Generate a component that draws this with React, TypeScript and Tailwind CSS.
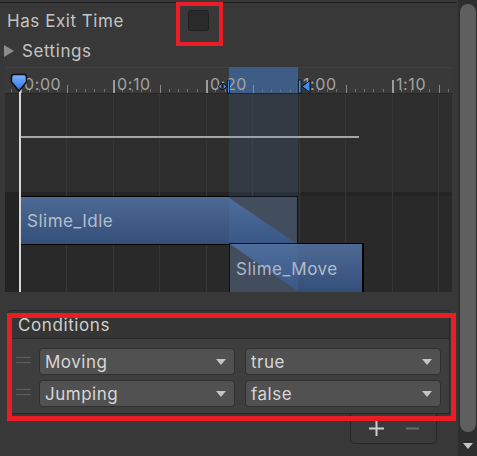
import React from "react";

const font = { fontFamily: "Inter, 'Noto Sans', sans-serif" };

const PX_PER_FRAME = 9.3;
const START = 15;

function Ruler() {
  const ticks: React.ReactElement[] = [];
  for (let f = -1; f <= 47; f++) {
    const x = START + f * PX_PER_FRAME;
    if (x < 0 || x > 447) continue;
    if (f % 10 === 0) {
      ticks.push(<rect key={f} x={Math.round(x)} y={13} width={2} height={13} fill="#9c9c9c" />);
    } else if (f % 5 === 0) {
      ticks.push(<rect key={f} x={Math.round(x)} y={18} width={1} height={8} fill="#8a8a8a" />);
    } else {
      ticks.push(<rect key={f} x={Math.round(x)} y={22} width={1} height={3} fill="#6e6e6e" />);
    }
  }
  return (
    <svg width={447} height={26} className="absolute left-0 top-0">
      {ticks}
    </svg>
  );
}

const labels = [
  { t: "0:00", x: 19 },
  { t: "0:10", x: 112 },
  { t: "0:20", x: 205 },
  { t: "1:00", x: 298 },
  { t: "1:10", x: 391 },
];

const gridXs = [61, 108, 154, 201, 247, 294, 340, 387, 433];

function Timeline() {
  return (
    <div className="relative ml-[5px] mt-[3px] w-[447px] h-[225px] overflow-hidden bg-[#2d2d2d]">
      <div className="absolute left-0 top-0 w-[447px] h-[26px] bg-[#393939] border-t border-[#414141]" />
      <div className="absolute left-[224px] top-0 w-[69px] h-[26px] bg-[#3d5c86]" />
      <Ruler />
      {labels.map((l) => (
        <span
          key={l.t}
          className="absolute top-[9px] text-[16px] leading-[16px] tracking-[0.6px] text-[#a3a3a3]"
          style={{ left: l.x }}
        >
          {l.t}
        </span>
      ))}
      <div className="absolute left-0 top-[26px] w-[447px] h-[1px] bg-[#262626]" />

      <div className="absolute left-0 top-[27px] w-[447px] h-[98px] bg-[#2e2e2e]" />
      <div className="absolute left-0 top-[125px] w-[447px] h-[4px] bg-[#242424]" />
      <div className="absolute left-0 top-[129px] w-[447px] h-[96px] bg-[#292929]" />
      <div className="absolute left-0 top-[125px] w-[14px] h-[100px] bg-[#232323]" />

      {gridXs.map((x) => (
        <div key={x} className="absolute top-[27px] w-[1px] h-[198px] bg-[#363636]" style={{ left: x }} />
      ))}

      <div className="absolute left-[15px] top-[69px] w-[339px] h-[2px] bg-[#a6a6a6]" />

      {/* Slime_Idle clip */}
      <div className="absolute left-[15px] top-[129px] w-[278px] h-[49px] bg-black p-[1px] pl-0">
        <div className="relative w-full h-full bg-gradient-to-b from-[#4d6a94] to-[#34507a] overflow-hidden">
          <svg className="absolute right-0 top-0" width={69} height={47}>
            <polygon points="0,0 69,0 69,47" fill="#3f444c" />
          </svg>
          <span className="absolute left-[7px] top-[14px] text-[17px] leading-[20px] tracking-[0.5px] text-[#b5bdca]">Slime_Idle</span>
        </div>
      </div>

      {/* Slime_Move clip */}
      <div className="absolute left-[224px] top-[176px] w-[135px] h-[50px] bg-black p-[1px] pr-[2px]">
        <div className="relative w-full h-full bg-gradient-to-b from-[#4d6a94] to-[#34507a] overflow-hidden">
          <svg className="absolute left-0 top-0" width={69} height={48}>
            <polygon points="0,0 69,48 0,48" fill="#3f444c" />
          </svg>
          <span className="absolute left-[6px] top-[15px] text-[17px] leading-[20px] tracking-[0.5px] text-[#b5bdca]">Slime_Move</span>
        </div>
      </div>

      <div className="absolute left-[224px] top-[27px] w-[69px] h-[198px] bg-[rgba(90,140,210,0.13)]" />

      <div className="absolute left-[14px] top-[22px] w-[2px] h-[203px] bg-[#d6d6d6]" />

      <svg className="absolute left-[5px] top-[6px]" width={18} height={20} viewBox="0 0 18 20">
        <defs>
          <linearGradient id="mk" x1="0" y1="0" x2="0" y2="1">
            <stop offset="0" stopColor="#7ab4ff" />
            <stop offset="1" stopColor="#2d6fe0" />
          </linearGradient>
        </defs>
        <path d="M1.5 4 Q1.5 1.5 4 1.5 H14 Q16.5 1.5 16.5 4 V9 L9 18 L1.5 9 Z" fill="url(#mk)" stroke="#111" strokeWidth="1.5" />
      </svg>

      <svg className="absolute left-[212px] top-[12px]" width={13} height={15} viewBox="0 0 13 15">
        <path d="M1 7.5 L5 4 L5 11 Z" fill="#3d8cf0" stroke="#0d0d0d" strokeWidth="1" />
        <path d="M10 7.5 L6 4 L6 11 Z" fill="#3d8cf0" stroke="#0d0d0d" strokeWidth="1" />
        <rect x="10.5" y="1" width="2" height="13" fill="#3d8cf0" stroke="#0d0d0d" strokeWidth="0.8" />
      </svg>

      <svg className="absolute left-[293px] top-[12px]" width={14} height={15} viewBox="0 0 14 15">
        <rect x="0.5" y="1" width="2.5" height="13" fill="#3d8cf0" stroke="#0d0d0d" strokeWidth="0.8" />
        <path d="M4 7.5 L12 1.5 L12 13.5 Z" fill="#3d8cf0" stroke="#0d0d0d" strokeWidth="1" />
      </svg>
    </div>
  );
}

function Dropdown({ label }: { label: string }) {
  return (
    <div className="w-[196px] h-[27px] rounded-[4px] bg-[#515151] border border-[#2f2f2f] flex items-center justify-between pl-[5px] pr-[8px]">
      <span className="text-[17px] leading-[20px] tracking-[0.5px] text-[#d6d6d6]">{label}</span>
      <svg width={10} height={6} viewBox="0 0 10 6">
        <path d="M0 0 H10 L5 6 Z" fill="#c4c4c4" />
      </svg>
    </div>
  );
}

function Handle() {
  return (
    <div className="w-[15px] h-[27px] flex flex-col pt-[9px] gap-[4px]">
      <div className="h-[1px] bg-[#5e5e5e]" />
      <div className="h-[1px] bg-[#5e5e5e]" />
    </div>
  );
}

function Row({ a, b }: { a: string; b: string }) {
  return (
    <div className="flex items-start pl-[8px]">
      <Handle />
      <div className="ml-[8px]">
        <Dropdown label={a} />
      </div>
      <div className="ml-[10px]">
        <Dropdown label={b} />
      </div>
    </div>
  );
}

export default function App() {
  return (
    <div className="relative flex w-[477px] h-[456px] overflow-hidden bg-[#383838]" style={font}>
      <div className="relative w-[458px] flex flex-col">
        <div className="mt-[2px] h-[1px] w-[457px] bg-[#1f1f1f]" />
        <div className="h-[35px] flex items-center">
          <div className="w-[188px] pl-[7px] text-[17px] leading-[20px] tracking-[0.55px] text-[#c4c4c4]">Has Exit Time</div>
          <div className="w-[21px] h-[21px] rounded-[3px] bg-[#2a2a2a] border border-[#202020]" />
        </div>
        <div className="h-[26px] flex items-center">
          <svg className="ml-[4px]" width={11} height={12} viewBox="0 0 11 12">
            <path d="M0 0 L10 6 L0 12 Z" fill="#8c8c8c" />
          </svg>
          <span className="ml-[7px] text-[17px] leading-[20px] tracking-[0.55px] text-[#c4c4c4]">Settings</span>
        </div>
        <Timeline />

        <div className="ml-[7px] mt-[18px] w-[443px] flex flex-col">
          <div className="h-[29px] bg-[#353535] border border-[#262626] rounded-t-[4px] flex items-center pl-[10px] pt-[1px]">
            <span className="text-[17px] leading-[20px] tracking-[0.6px] text-[#d0d0d0]">Conditions</span>
          </div>
          <div className="h-[75px] bg-[#3e3e3e] border-x border-b border-[#262626] pt-[9px] flex flex-col gap-[5px]">
            <Row a="Moving" b="true" />
            <Row a="Jumping" b="false" />
          </div>
          <div className="flex justify-end pr-[13px]">
            <div className="w-[87px] h-[31px] -mt-[1px] bg-[#3a3a3a] border border-[#262626] rounded-b-[5px] flex items-center justify-center gap-[22px]">
              <svg width={15} height={15} viewBox="0 0 15 15">
                <rect x="6.5" y="0" width="2" height="15" fill="#cdcdcd" />
                <rect x="0" y="6.5" width="15" height="2" fill="#cdcdcd" />
              </svg>
              <svg width={13} height={15} viewBox="0 0 13 15">
                <rect x="0" y="6.5" width="13" height="2" fill="#6c6c6c" />
              </svg>
            </div>
          </div>
        </div>
      </div>

      <div className="relative w-[19px] h-[456px] bg-[#2e2e2e] flex flex-col items-center">
        <div className="mt-[4px] ml-[1px] w-[16px] h-[428px] rounded-t-[8px] rounded-b-[8px] bg-[#5f5f5f]" />
        <svg className="mt-[11px] ml-[1px]" width={10} height={6} viewBox="0 0 10 6">
          <path d="M0 0 H10 L5 6 Z" fill="#c6c6c6" />
        </svg>
      </div>

      <div className="absolute left-[176px] top-[2px] w-[47px] h-[44px] border-[4px] border-[#ec1c24]" />
      <div className="absolute left-[7px] top-[313px] w-[449px] h-[108px] border-[5px] border-[#ec1c24]" />
    </div>
  );
}
